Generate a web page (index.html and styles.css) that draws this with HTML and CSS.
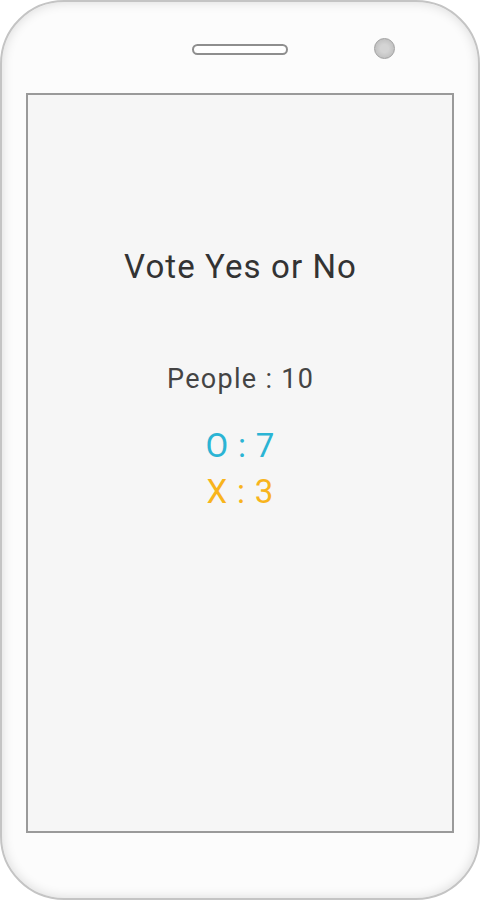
FILE: index.html
```html
<!DOCTYPE html>
<html lang="en">
  <head>
    <meta charset="UTF-8" />
    <meta name="viewport" content="width=device-width, initial-scale=1.0" />
    <title>Vote Yes or No</title>
    <link rel="stylesheet" href="styles.css">
  </head>
  <body>
    <div class="phone">
      <div class="top-bar">
        <span></span>
        <div class="speaker"></div>
        <div class="camera"></div>
      </div>

      <div class="screen">
        <h2 class="title">Vote Yes or No</h2>
        <p class="people">People : 10</p>
        <p class="count yes">O : 7</p>
        <p class="count no">X : 3</p>
      </div>
    </div>
  </body>
</html>
```

FILE: styles.css
```css
* {
  box-sizing: border-box;
}

body {
  margin: 0;
  background-color: white;
  font-family: Roboto, "Noto Sans", Arial, sans-serif;
}

.phone {
  display: flex;
  flex-direction: column;
  width: 480px;
  height: 900px;
  padding: 0 24px;
  background-color: #fcfcfc;
  border: 2px solid #c4c4c4;
  border-radius: 64px;
  box-shadow: inset 0 0 12px rgba(0, 0, 0, 0.14);
}

.top-bar {
  display: grid;
  grid-template-columns: 1fr auto 1fr;
  align-items: start;
  height: 91px;
  padding-top: 42px;
}

.speaker {
  width: 96px;
  height: 11px;
  background-color: white;
  border: 2px solid #8e8e8e;
  border-radius: 6px;
}

.camera {
  width: 21px;
  height: 21px;
  margin-left: 86px;
  margin-top: -6px;
  border-radius: 50%;
  border: 1px solid #a0a0a0;
  background: radial-gradient(circle, #d4d4d4 30%, #b4b4b4 100%);
}

.screen {
  display: flex;
  flex-direction: column;
  align-items: center;
  height: 740px;
  padding-top: 152px;
  background-color: #f6f6f6;
  border: 2px solid #9a9a9a;
  text-align: center;
}

.title {
  margin: 0;
  padding-left: 1.1px;
  font-size: 33px;
  line-height: 40px;
  font-weight: 400;
  letter-spacing: 1.1px;
  color: #333333;
}

.people {
  margin: 76px 0 28px;
  padding-left: 1.3px;
  font-size: 27px;
  line-height: 32px;
  letter-spacing: 1.3px;
  color: #444444;
}

.count {
  margin: 0;
  padding-left: 0.8px;
  font-size: 33px;
  line-height: 46px;
  letter-spacing: 0.8px;
}

.yes {
  color: #2bb4d4;
}

.no {
  color: #f8b41c;
}
```
